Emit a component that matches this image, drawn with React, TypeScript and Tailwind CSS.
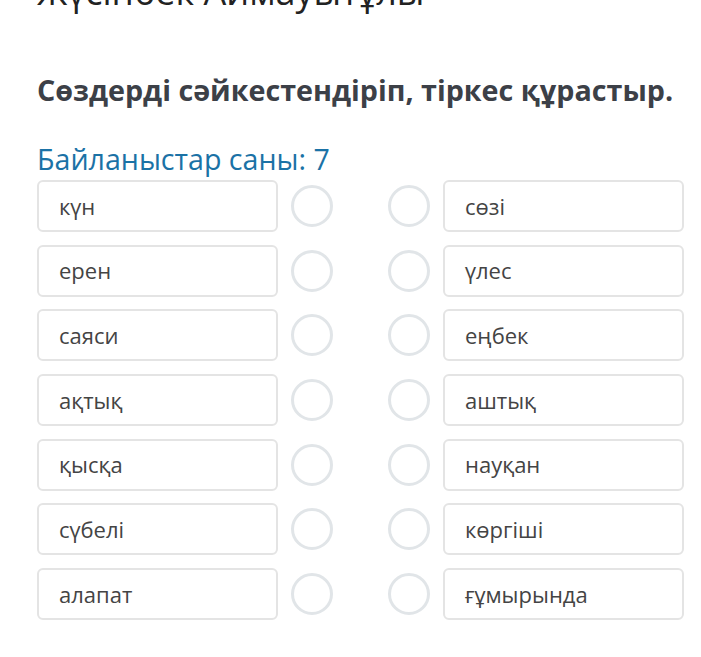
import React from 'react'

const left = ['күн', 'ерен', 'саяси', 'ақтық', 'қысқа', 'сүбелі', 'алапат']
const right = ['сөзі', 'үлес', 'еңбек', 'аштық', 'науқан', 'көргіші', 'ғұмырында']

function Dot() {
  return <div className="h-[42px] w-[42px] shrink-0 rounded-full border-[3px] border-[#e1e5e8] bg-white" />
}

function Word({ text }: { text: string }) {
  return (
    <div className="flex h-[52px] w-[241px] shrink-0 items-center rounded-[6px] border-2 border-[#e4e4e4] bg-white pl-[20px] text-[22px] text-[#444]">
      {text}
    </div>
  )
}

export default function App() {
  return (
    <main className="min-h-screen bg-white pl-[37px] font-['Open_Sans',sans-serif]">
      <div className="-mt-[32px] text-[36px] leading-[48px] text-[#222]">Жүсіпбек Аймауытұлы</div>
      <h1 className="mt-[54px] text-[28.7px] font-bold leading-[40px] text-[#3c4047]">
        Сөздерді сәйкестендіріп, тіркес құрастыр.
      </h1>
      <div className="mt-[30px] text-[28.6px] leading-[38px] text-[#1b72a6]">Байланыстар саны: 7</div>
      <div className="mt-[2px] flex flex-col gap-[12.7px]">
        {left.map((w, i) => (
          <div key={w} className="flex items-center">
            <Word text={w} />
            <div className="ml-[13px]"><Dot /></div>
            <div className="ml-[55px]"><Dot /></div>
            <div className="ml-[13px]"><Word text={right[i]} /></div>
          </div>
        ))}
      </div>
    </main>
  )
}
